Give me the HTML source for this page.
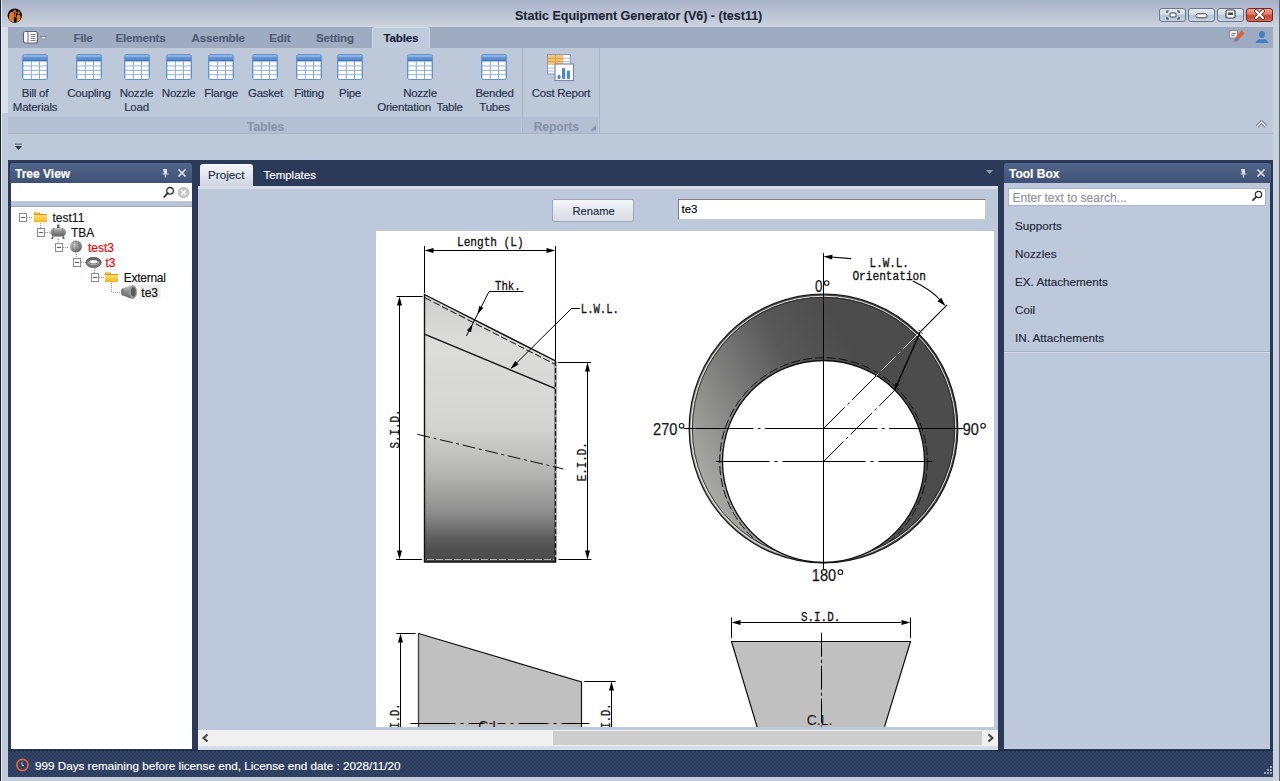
<!DOCTYPE html>
<html><head><meta charset="utf-8">
<style>
*{margin:0;padding:0;box-sizing:border-box}
html,body{width:1280px;height:781px;overflow:hidden}
body{position:relative;background:#c2cbd9;font-family:"Liberation Sans",sans-serif;font-size:12px;color:#1e2b44}
.a{position:absolute}
.t{position:absolute;white-space:nowrap;line-height:1;-webkit-text-stroke:0.15px currentColor}
.rl{font-size:11.5px;letter-spacing:-0.25px;color:#27324a;transform:translateX(-50%)}
.gl{font-size:12px;font-weight:bold;color:#8893a8;transform:translateX(-50%)}
.wb{width:27px;height:14px;border:1px solid #6b778c;border-radius:3px;background:linear-gradient(#e4eaf2,#d3dce8 45%,#b5c3d5 55%,#c9d4e2)}
.tr{font-size:12px;color:#111}
.ti{font-size:11.7px;color:#1e2638}
.tb{font-size:11.6px;font-weight:bold;color:#4f5c76;letter-spacing:-0.2px}
</style></head><body>

<svg width="0" height="0" style="position:absolute">
<defs>
<linearGradient id="gHdr" x1="0" y1="0" x2="0" y2="1"><stop offset="0" stop-color="#7aa5de"/><stop offset="1" stop-color="#4f82c9"/></linearGradient>
<symbol id="tbl" viewBox="0 0 26 26">
<rect x="0.5" y="0.5" width="25" height="25" rx="2" fill="#88acdc" stroke="#6691cf"/>
<rect x="1" y="1" width="24" height="5.8" rx="1" fill="url(#gHdr)"/>
<rect x="1.5" y="1.5" width="23" height="1" fill="#a9c6ec"/>
<rect x="1" y="6.3" width="24" height="0.9" fill="#3c6db5"/>
<g fill="#fdfeff">
<rect x="1.5" y="7.6" width="7.3" height="3.9"/><rect x="9.8" y="7.6" width="7.2" height="3.9"/><rect x="18" y="7.6" width="6.5" height="3.9"/>
<rect x="1.5" y="12.4" width="7.3" height="3.5"/><rect x="9.8" y="12.4" width="7.2" height="3.5"/><rect x="18" y="12.4" width="6.5" height="3.5"/>
<rect x="1.5" y="16.8" width="7.3" height="3.5"/><rect x="9.8" y="16.8" width="7.2" height="3.5"/><rect x="18" y="16.8" width="6.5" height="3.5"/>
<rect x="1.5" y="21.2" width="7.3" height="3.8"/><rect x="9.8" y="21.2" width="7.2" height="3.8"/><rect x="18" y="21.2" width="6.5" height="3.8"/>
</g>
</symbol>
</defs></svg>
<!-- window frame -->
<div class="a" style="left:0;top:0;width:1280px;height:781px;background:linear-gradient(#a7b2c6,#c9d1dd 25px,#d2d9e3 26px,#c0cad9 27px,#c0cad9)"></div>
<div class="a" style="left:0;top:0;width:1px;height:781px;background:#1b2230"></div>
<div class="a" style="left:1px;top:0;width:1px;height:781px;background:#e8edf4"></div>
<div class="a" style="left:2px;top:27px;width:6px;height:86px;background:#d9dfe8"></div>
<div class="a" style="left:1279px;top:0;width:1px;height:781px;background:#5b6578"></div>
<div class="a" style="left:1273px;top:27px;width:6px;height:754px;background:#c9d1dd"></div>

<!-- title bar -->
<div class="t" style="left:515px;top:10px;font-weight:bold;font-size:12.5px;color:#1d2636">Static Equipment Generator (V6) - (test11)</div>

<!-- ribbon tab row -->
<div class="a" style="left:8px;top:27px;width:1265px;height:21px;background:#9eabc1"></div>
<div class="a" style="left:372px;top:27px;width:58px;height:21px;background:#bfcada;border:1px solid #d0d8e3;border-bottom:none;border-radius:3px 3px 0 0"></div>

<!-- ribbon body -->
<div class="a" style="left:8px;top:48px;width:1265px;height:86px;background:#bdc8d8"></div>
<div class="a" style="left:8px;top:117px;width:513px;height:16px;background:#b4c0d1"></div>
<div class="a" style="left:523px;top:117px;width:75px;height:16px;background:#b4c0d1"></div>
<div class="a" style="left:8px;top:133px;width:1265px;height:1px;background:#a9b5c7"></div>


<!-- ribbon icons -->
<svg class="a" style="left:22px;top:54px" width="26" height="26"><use href="#tbl"/></svg>
<svg class="a" style="left:76px;top:54px" width="26" height="26"><use href="#tbl"/></svg>
<svg class="a" style="left:124px;top:54px" width="26" height="26"><use href="#tbl"/></svg>
<svg class="a" style="left:166px;top:54px" width="26" height="26"><use href="#tbl"/></svg>
<svg class="a" style="left:208px;top:54px" width="26" height="26"><use href="#tbl"/></svg>
<svg class="a" style="left:252px;top:54px" width="26" height="26"><use href="#tbl"/></svg>
<svg class="a" style="left:296px;top:54px" width="26" height="26"><use href="#tbl"/></svg>
<svg class="a" style="left:337px;top:54px" width="26" height="26"><use href="#tbl"/></svg>
<svg class="a" style="left:407px;top:54px" width="26" height="26"><use href="#tbl"/></svg>
<svg class="a" style="left:481px;top:54px" width="26" height="26"><use href="#tbl"/></svg>
<!-- cost report icon -->
<svg class="a" style="left:546px;top:53px" width="30" height="30" viewBox="0 0 30 30">
<rect x="1.5" y="1.5" width="23" height="19.5" fill="#f4f7fc" stroke="#8c98bd"/>
<rect x="2" y="2" width="15.5" height="10" fill="#f2c676"/>
<path d="M2 5.5h15.5M2 8.5h15.5M9.5 2v10" stroke="#d9a449" stroke-width="1"/>
<path d="M17.5 5.5h7M17.5 8.5h7M2 15h7M2 18h7" stroke="#b9c4de" stroke-width="1"/>
<rect x="9" y="11" width="18.5" height="16.5" fill="#fff" stroke="#7e88ad" stroke-width="1.2"/>
<rect x="11.5" y="22" width="3" height="4" rx="1" fill="#4f86cc"/>
<rect x="16" y="15" width="3.2" height="11" rx="1" fill="#4f86cc"/>
<rect x="20.8" y="17.5" width="3.2" height="8.5" rx="1" fill="#4f86cc"/>
</svg>
<!-- ribbon labels -->
<div class="t rl" style="left:35px;top:88px">Bill of</div>
<div class="t rl" style="left:35px;top:101.8px">Materials</div>
<div class="t rl" style="left:89px;top:88px">Coupling</div>
<div class="t rl" style="left:136.5px;top:88px">Nozzle</div>
<div class="t rl" style="left:136.5px;top:101.8px">Load</div>
<div class="t rl" style="left:178.7px;top:88px">Nozzle</div>
<div class="t rl" style="left:221px;top:88px">Flange</div>
<div class="t rl" style="left:265.5px;top:88px">Gasket</div>
<div class="t rl" style="left:309px;top:88px">Fitting</div>
<div class="t rl" style="left:350px;top:88px">Pipe</div>
<div class="t rl" style="left:420px;top:88px">Nozzle</div>
<div class="t rl" style="left:420px;top:101.8px">Orientation&nbsp; Table</div>
<div class="t rl" style="left:494.5px;top:88px">Bended</div>
<div class="t rl" style="left:494.5px;top:101.8px">Tubes</div>
<div class="t rl" style="left:561px;top:88px">Cost Report</div>
<div class="t gl" style="left:265.5px;top:120.5px">Tables</div>
<div class="t gl" style="left:556.3px;top:120.5px">Reports</div>
<div class="a" style="left:522px;top:48px;width:1px;height:86px;background:#a9b5c7"></div>
<div class="a" style="left:599px;top:48px;width:1px;height:86px;background:#a9b5c7"></div>
<svg class="a" style="left:590px;top:124px" width="8" height="8"><path d="M6 1v5.5H0.5z" fill="#8995aa"/></svg>
<!-- tab labels -->
<div class="t tb" style="left:73.4px;top:32px">File</div>
<div class="t tb" style="left:115.5px;top:32px">Elements</div>
<div class="t tb" style="left:191.5px;top:32px">Assemble</div>
<div class="t tb" style="left:269.3px;top:32px">Edit</div>
<div class="t tb" style="left:316px;top:32px">Setting</div>
<div class="t tb" style="left:383.6px;top:32px;color:#15203a">Tables</div>
<!-- qat row -->
<div class="a" style="left:8px;top:135px;width:1265px;height:25px;background:#bdc8d8"></div>


<!-- app logo -->
<svg class="a" style="left:7px;top:8px" width="16" height="16" viewBox="0 0 16 16">
<defs><clipPath id="lc"><circle cx="7.8" cy="7.6" r="7"/></clipPath></defs>
<circle cx="7.8" cy="7.6" r="7.2" fill="#0a0806"/>
<g clip-path="url(#lc)" fill="#de7a25">
<path d="M2 16V8.5C2 5.5 3.3 3.8 5 3.8S7.6 5.3 7.6 7.5V16z"/>
<path d="M5.8 3.6C6.5 2.2 8 1.8 9 2.6 9.6 3.1 9.6 4.3 9.3 5.2L8.8 9.8 8 9.8 8.3 5C8.4 4.2 7.8 3.8 7 4.3z"/>
<path d="M9.6 16V9.2C9.6 7.4 10.4 6.4 11.6 6.4S13.6 7.4 13.6 9.2V16z"/>
<circle cx="11.6" cy="4.8" r="1.2"/>
</g>
<path d="M7.6 9v7" stroke="#0a0806" stroke-width="1.4" clip-path="url(#lc)"/>
</svg>
<!-- window buttons -->
<div class="a wb" style="left:1159px;top:8px"></div>
<div class="a wb" style="left:1188px;top:8px"></div>
<div class="a wb" style="left:1217px;top:8px"></div>
<div class="a wb" style="left:1246px;top:8px;border-color:#6a2a30;background:linear-gradient(#f3a28c,#e27a60 45%,#c9462a 55%,#d9674c)"></div>
<svg class="a" style="left:1166px;top:10px" width="14" height="10" viewBox="0 0 14 10"><path d="M1 3V1h2M11 1h2v2M13 7v2h-2M3 9H1V7" stroke="#3a4252" stroke-width="1.2" fill="none"/><rect x="4" y="3" width="6" height="4" rx="1" fill="#fff" stroke="#3a4252"/></svg>
<svg class="a" style="left:1195px;top:13px" width="14" height="6" viewBox="0 0 14 6"><rect x="1" y="0.8" width="11" height="4" rx="1.5" fill="#fff" stroke="#3a4252"/></svg>
<svg class="a" style="left:1224px;top:9px" width="14" height="11" viewBox="0 0 14 11"><rect x="2" y="1" width="9" height="8" rx="1.5" fill="#fff" stroke="#3a4252" stroke-width="1.2"/><rect x="4" y="3.5" width="5" height="2.5" fill="#3a4a66"/></svg>
<svg class="a" style="left:1253px;top:9px" width="14" height="12" viewBox="0 0 14 12"><path d="M3 2l7 7M10 2l-7 7" stroke="#3a2a2a" stroke-width="3.6" stroke-linecap="round"/><path d="M3 2l7 7M10 2l-7 7" stroke="#fff" stroke-width="2.2" stroke-linecap="round"/></svg>
<!-- app menu icon -->
<svg class="a" style="left:22px;top:30px" width="28" height="15" viewBox="0 0 28 15">
<rect x="1.5" y="1.5" width="14" height="11.5" rx="2" fill="#fff" stroke="#5c6478" stroke-width="1.2"/>
<path d="M6 2v10.5" stroke="#5c6478" stroke-width="1"/>
<path d="M8.5 4.5h5M8.5 6.5h5M8.5 8.5h5M8.5 10.5h5" stroke="#6a7286" stroke-width="0.9"/>
<path d="M18.5 6.5h6l-3 3.5z" fill="#fff" stroke="#6a7286" stroke-width="0.8"/>
</svg>
<!-- eraser icon -->
<svg class="a" style="left:1228px;top:29px" width="18" height="14" viewBox="0 0 18 14">
<rect x="1.5" y="1.5" width="8" height="7.5" fill="#f2f2f2" stroke="#8a8a8a"/>
<path d="M3.5 4.5h4M3.5 6.5h3" stroke="#777" stroke-width="1"/>
<path d="M7.5 8.5L13.5 1.5 16.5 4 10.5 11z" fill="#e35f3a"/>
<path d="M7.5 8.5l3 2.5-2 1.8-2.2-1.9z" fill="#4b86d0"/>
<path d="M6.3 10.9l-0.8 2.1 2.2-0.8z" fill="#e35f3a"/>
</svg>
<!-- user icon -->
<svg class="a" style="left:1255px;top:30px" width="14" height="14" viewBox="0 0 14 14">
<ellipse cx="7" cy="4.4" rx="2.9" ry="3.5" fill="#3f80c8"/>
<path d="M0.5 13c0.8-2.6 2.8-3.6 4.2-4 0.8 0.8 3.8 0.8 4.6 0 1.4 0.4 3.4 1.4 4.2 4z" fill="#3f80c8"/>
</svg>
<!-- collapse chevron -->
<svg class="a" style="left:1255px;top:119px" width="13" height="10" viewBox="0 0 13 10"><path d="M2 7.5l4.5-4.5 4.5 4.5" stroke="#6e7688" stroke-width="3.4" fill="none" stroke-linejoin="round"/><path d="M2 7.5l4.5-4.5 4.5 4.5" stroke="#f4f6f9" stroke-width="1.4" fill="none"/></svg>
<!-- qat arrow -->
<svg class="a" style="left:14px;top:143px" width="9" height="8" viewBox="0 0 9 8"><rect x="1" y="0.5" width="7" height="1.3" fill="#6b7486"/><path d="M1 3h7l-3.5 4z" fill="#2c3444"/></svg>
<!-- main navy frame -->
<div class="a" style="left:8px;top:160px;width:1265px;height:617px;background:#2b3a58"></div>

<!-- tree view panel -->
<div class="a" style="left:10px;top:163px;width:182px;height:20px;background:linear-gradient(#52658a,#3f5176);border-radius:3px 3px 0 0"></div>
<div class="t" style="left:15px;top:167.5px;font-weight:bold;font-size:12px;color:#fff">Tree View</div>
<div class="a" style="left:11px;top:183px;width:181px;height:18px;background:#fff"></div>
<div class="a" style="left:11px;top:201px;width:181px;height:6px;background:#b9c5d6;border-bottom:1px solid #9ba7bb"></div>
<div class="a" style="left:11px;top:207px;width:181px;height:542px;background:#fff"></div>


<!-- tree search icons -->
<svg class="a" style="left:163px;top:186px" width="12" height="12" viewBox="0 0 12 12"><circle cx="7" cy="4.8" r="3.3" fill="none" stroke="#2a2f3a" stroke-width="1.3"/><path d="M4.8 7.2L1.2 10.8" stroke="#2a2f3a" stroke-width="1.8" stroke-linecap="round"/></svg>
<svg class="a" style="left:177px;top:186px" width="13" height="13" viewBox="0 0 13 13"><circle cx="6.5" cy="6.5" r="5.8" fill="#c4c4c4"/><path d="M4 4l5 5M9 4l-5 5" stroke="#fff" stroke-width="1.3"/></svg>
<!-- tree rows -->
<svg class="a" style="left:11px;top:207px" width="181" height="100" viewBox="11 207 181 100">
<g stroke="#9a9a9a" stroke-width="1" stroke-dasharray="1 1" fill="none">
<path d="M27 217.5h6M40.5 223v5M45 232.5h5M58.5 239v4M63 247.5h6M76.5 254v4M81 262.5h5M94.5 268v5M99 277.5h6M111.5 283v9M113 292.5h8"/>
</g>
<g fill="#fff" stroke="#8c8c8c" stroke-width="1">
<rect x="19.5" y="213.5" width="7" height="8"/><rect x="37.5" y="228.5" width="7" height="8"/><rect x="55.5" y="243.5" width="7" height="8"/><rect x="73.5" y="258.5" width="7" height="8"/><rect x="91.5" y="273.5" width="7" height="8"/>
</g>
<g stroke="#4060b0" stroke-width="1"><path d="M21 217.5h4M39 232.5h4M57 247.5h4M75 262.5h4M93 277.5h4"/></g>
<!-- folder -->
<defs>
<linearGradient id="gFold" x1="0" y1="0" x2="0" y2="1"><stop offset="0" stop-color="#ffe06a"/><stop offset="1" stop-color="#f2b51c"/></linearGradient>
<radialGradient id="gMet" cx="0.35" cy="0.35" r="0.75"><stop offset="0" stop-color="#d8d8d8"/><stop offset="0.6" stop-color="#8f8f8f"/><stop offset="1" stop-color="#5a5a5a"/></radialGradient>
<linearGradient id="gDrum" x1="0" y1="0" x2="0" y2="1"><stop offset="0" stop-color="#c9c9c9"/><stop offset="0.5" stop-color="#8a8a8a"/><stop offset="1" stop-color="#5f5f5f"/></linearGradient>
</defs>
<g><path d="M34 212.5h5.5l1.2 1.5h6.3v8h-13z" fill="#d9951a"/><path d="M34 215h13v7.2h-13z" fill="url(#gFold)"/><path d="M35 213.5h4" stroke="#f5c35a" stroke-width="1"/></g>
<g><path d="M105 272.5h5.5l1.2 1.5h6.3v8h-13z" fill="#d9951a"/><path d="M105 275h13v7.2h-13z" fill="url(#gFold)"/><path d="M106 273.5h4" stroke="#f5c35a" stroke-width="1"/></g>
<!-- tank -->
<g><rect x="50.5" y="227.5" width="15.5" height="9" rx="4.5" fill="url(#gDrum)"/><path d="M53.5 228v8M62.5 228v8" stroke="#6f6f6f" stroke-width="0.7"/><rect x="57" y="224.5" width="2.5" height="3.5" fill="#666"/><path d="M53 236.5l-1 2.5M63 236.5l1 2.5" stroke="#555" stroke-width="1.6"/></g>
<!-- sphere -->
<circle cx="75.9" cy="246.5" r="6" fill="url(#gMet)"/><path d="M73.5 241.2q-1.5 5.3 0 10.6M76 240.5v12M78.4 241.2q1.5 5.3 0 10.6" stroke="#5e5e5e" stroke-width="0.6" fill="none"/>
<!-- ring -->
<ellipse cx="93.6" cy="262.3" rx="6.6" ry="4" fill="none" stroke="#7a7a7a" stroke-width="2.6"/><ellipse cx="93.6" cy="261.8" rx="4.6" ry="2.2" fill="none" stroke="#3a3a3a" stroke-width="0.9"/><ellipse cx="93.6" cy="262.6" rx="7.6" ry="4.9" fill="none" stroke="#3a3a3a" stroke-width="0.6"/>
<!-- cone -->
<g><path d="M122 288.5l10.5-3.6v14l-10.5-3.6z" fill="url(#gDrum)"/><ellipse cx="133" cy="291.9" rx="4" ry="7" fill="#9a9a9a"/><ellipse cx="133.3" cy="291.9" rx="2.4" ry="4.6" fill="#5a5a5a"/><ellipse cx="122.3" cy="292" rx="1.2" ry="3.6" fill="#777"/></g>
<rect x="139.5" y="284.5" width="21" height="14" fill="#ebebeb"/>
</svg>
<div class="t tr" style="left:52.5px;top:211.7px">test11</div>
<div class="t tr" style="left:71px;top:226.7px">TBA</div>
<div class="t tr" style="left:88px;top:241.7px;color:#f00">test3</div>
<div class="t tr" style="left:105.5px;top:256.7px;color:#f00">t3</div>
<div class="t tr" style="left:123.7px;top:271.7px;letter-spacing:-0.25px">External</div>
<div class="t tr" style="left:141.3px;top:286.7px">te3</div>
<!-- panel header icons -->
<svg class="a" style="left:160px;top:168px" width="10" height="10" viewBox="0 0 10 10"><path d="M3 1h4v4.5h1.5v1h-6v-1H4z" fill="#d8dde8"/><path d="M5.5 6.5v3" stroke="#d8dde8" stroke-width="1.2"/></svg>
<svg class="a" style="left:177px;top:168px" width="10" height="10" viewBox="0 0 10 10"><path d="M1.5 1.5l7 7M8.5 1.5l-7 7" stroke="#e4e8f0" stroke-width="1.6"/></svg>
<!-- document area -->
<div class="a" style="left:198px;top:186px;width:800px;height:564px;background:#bdc9da"></div>
<div class="a" style="left:200px;top:164px;width:53px;height:22px;background:linear-gradient(#f4f6fa,#cfd6e2);border-radius:3px 3px 0 0"></div>
<div class="t" style="left:208px;top:169px;font-size:11.7px;color:#1e2b44">Project</div>
<div class="t" style="left:263.5px;top:169.5px;font-size:11.5px;color:#fff">Templates</div>


<!-- doc tab strip -->
<svg class="a" style="left:985px;top:169px" width="9" height="6" viewBox="0 0 9 6"><path d="M1 1h7l-3.5 4z" fill="#8d9ab2"/></svg>
<div class="a" style="left:198px;top:186px;width:800px;height:3px;background:#d6dde8"></div>
<!-- rename -->
<div class="a" style="left:552px;top:199px;width:82px;height:23px;border:1px solid #9ea7b8;border-radius:2px;background:linear-gradient(#f6f7fa,#e3e7ee 50%,#d7dce6)"></div>
<div class="t" style="left:572.5px;top:205.7px;font-size:11.2px;color:#1e2b44">Rename</div>
<div class="a" style="left:678px;top:199px;width:308px;height:21px;border:1px solid #7d7d7d;border-bottom-color:#c8c8c8;border-right-color:#c8c8c8;background:#fff"></div>
<div class="t" style="left:681.5px;top:204px;font-size:11.5px;color:#000">te3</div>
<!-- drawing -->
<div class="a" style="left:376px;top:231px;width:618px;height:496px;background:#fff"></div>
<!-- DRAW START -->
<svg class="a" style="left:376px;top:231px" width="618" height="496" viewBox="376 231 618 496">
<defs>
<linearGradient id="gEl" gradientUnits="userSpaceOnUse" x1="0" y1="294" x2="0" y2="562">
<stop offset="0" stop-color="#cdcdcd"/><stop offset="0.17" stop-color="#dcdcda"/><stop offset="0.4" stop-color="#d7d7d5"/><stop offset="0.5" stop-color="#d3d3d1"/><stop offset="0.68" stop-color="#b2b2b0"/><stop offset="0.82" stop-color="#8c8c8c"/><stop offset="0.91" stop-color="#5e5e5e"/><stop offset="0.955" stop-color="#4f4f4f"/><stop offset="1" stop-color="#4a4a4a"/>
</linearGradient>
<linearGradient id="gRing" gradientUnits="userSpaceOnUse" x1="695" y1="500" x2="880" y2="400">
<stop offset="0" stop-color="#b2b2b0"/><stop offset="0.35" stop-color="#858584"/><stop offset="0.7" stop-color="#585858"/><stop offset="1" stop-color="#4c4c4c"/>
</linearGradient>
</defs>
<path d="M424.5 294.5L555.5 361V562H424.5z" fill="url(#gEl)" stroke="#111" stroke-width="1.4"/>
<path d="M425.00 297.80L431.23 300.99M433.46 302.13L439.69 305.31M441.92 306.45L448.15 309.64M450.37 310.78L456.60 313.97M458.83 315.11L465.06 318.29M467.29 319.43L473.52 322.62M475.75 323.76L481.98 326.95M484.20 328.08L490.44 331.27M492.66 332.41L498.89 335.60M501.12 336.74L507.35 339.93M509.58 341.06L515.81 344.25M518.03 345.39L524.27 348.58M526.49 349.72L532.72 352.90M534.95 354.04L541.18 357.23M543.41 358.37L549.64 361.56M551.86 362.70L555.00 364.30" stroke="#2a2a2a" stroke-width="1.1" fill="none"/>
<path d="M424.50 334.20L555.50 388.70" stroke="#111" stroke-width="1.4" />
<path d="M555.50 361.00L555.50 562.00" stroke="#111" stroke-width="1.4" />
<path d="M555.50 366.00L555.50 368.00M555.50 373.00L555.50 375.00M555.50 380.00L555.50 382.00M555.50 387.00L555.50 389.00M555.50 394.00L555.50 396.00M555.50 401.00L555.50 403.00M555.50 408.00L555.50 410.00M555.50 415.00L555.50 417.00M555.50 422.00L555.50 424.00M555.50 429.00L555.50 431.00M555.50 436.00L555.50 438.00M555.50 443.00L555.50 445.00M555.50 450.00L555.50 452.00M555.50 457.00L555.50 459.00M555.50 464.00L555.50 466.00M555.50 471.00L555.50 473.00M555.50 478.00L555.50 480.00M555.50 485.00L555.50 487.00M555.50 492.00L555.50 494.00M555.50 499.00L555.50 501.00M555.50 506.00L555.50 508.00M555.50 513.00L555.50 515.00M555.50 520.00L555.50 522.00M555.50 527.00L555.50 529.00M555.50 534.00L555.50 536.00M555.50 541.00L555.50 543.00M555.50 548.00L555.50 550.00M555.50 555.00L555.50 557.00" stroke="#f0f0f0" stroke-width="0.8" fill="none"/>
<path d="M427.00 559.50L434.00 559.50M436.00 559.50L443.00 559.50M445.00 559.50L452.00 559.50M454.00 559.50L461.00 559.50M463.00 559.50L470.00 559.50M472.00 559.50L479.00 559.50M481.00 559.50L488.00 559.50M490.00 559.50L497.00 559.50M499.00 559.50L506.00 559.50M508.00 559.50L515.00 559.50M517.00 559.50L524.00 559.50M526.00 559.50L533.00 559.50M535.00 559.50L542.00 559.50M544.00 559.50L551.00 559.50M553.00 559.50L554.00 559.50" stroke="#e0e0e0" stroke-width="0.7" fill="none"/>
<path d="M424.50 246.00L424.50 293.00" stroke="#000" stroke-width="1" />
<path d="M555.50 246.00L555.50 360.00" stroke="#000" stroke-width="1" />
<path d="M433.00 250.50L547.00 250.50" stroke="#000" stroke-width="1" />
<path d="M424.50 250.50L433.50 248.00L433.50 253.00z" fill="#000"/>
<path d="M555.50 250.50L546.50 253.00L546.50 248.00z" fill="#000"/>
<text x="490.3" y="246" font-family="Liberation Mono" font-size="12.5" text-anchor="middle" fill="#111"  textLength="66.6" lengthAdjust="spacingAndGlyphs" stroke="#111" stroke-width="0.3">Length (L)</text>
<path d="M489.00 291.50L523.50 291.50" stroke="#000" stroke-width="1" />
<path d="M489.00 291.60L466.40 336.00" stroke="#000" stroke-width="1" />
<path d="M477.60 314.20L479.18 306.03L483.28 308.11z" fill="#000"/>
<path d="M472.60 324.20L471.02 332.37L466.92 330.29z" fill="#000"/>
<text x="495" y="289.5" font-family="Liberation Mono" font-size="12.5" text-anchor="start" fill="#111"  textLength="25.7" lengthAdjust="spacingAndGlyphs" stroke="#111" stroke-width="0.3">Thk.</text>
<path d="M572.00 308.50L580.00 308.50" stroke="#000" stroke-width="1" />
<path d="M572.00 308.00L513.00 366.50" stroke="#000" stroke-width="1" />
<path d="M510.50 369.00L515.13 360.89L518.65 364.44z" fill="#000"/>
<text x="580.8" y="312.5" font-family="Liberation Mono" font-size="12.5" text-anchor="start" fill="#111"  textLength="38.1" lengthAdjust="spacingAndGlyphs" stroke="#111" stroke-width="0.3">L.W.L.</text>
<path d="M396.50 296.50L422.70 296.50" stroke="#000" stroke-width="1" />
<path d="M396.00 559.50L422.00 559.50" stroke="#000" stroke-width="1" />
<path d="M399.50 305.00L399.50 551.00" stroke="#000" stroke-width="1" />
<path d="M399.50 296.50L402.00 305.50L397.00 305.50z" fill="#000"/>
<path d="M399.50 559.50L397.00 550.50L402.00 550.50z" fill="#000"/>
<text x="398.5" y="429" font-family="Liberation Mono" font-size="12.5" text-anchor="middle" fill="#111" transform="rotate(-90 398.5 429)"  textLength="38.9" lengthAdjust="spacingAndGlyphs" stroke="#111" stroke-width="0.3">S.I.D.</text>
<path d="M558.00 362.50L591.00 362.50" stroke="#000" stroke-width="1" />
<path d="M558.60 559.50L591.40 559.50" stroke="#000" stroke-width="1" />
<path d="M587.50 370.00L587.50 551.00" stroke="#000" stroke-width="1" />
<path d="M587.50 362.50L590.00 371.50L585.00 371.50z" fill="#000"/>
<path d="M587.50 559.50L585.00 550.50L590.00 550.50z" fill="#000"/>
<text x="586" y="461.8" font-family="Liberation Mono" font-size="12.5" text-anchor="middle" fill="#111" transform="rotate(-90 586 461.8)"  textLength="38.9" lengthAdjust="spacingAndGlyphs" stroke="#111" stroke-width="0.3">E.I.D.</text>
<path d="M417.40 434.30L430.05 437.31M433.55 438.14L436.47 438.83M439.97 439.66L452.62 442.67M456.12 443.50L459.04 444.20M462.54 445.03L475.19 448.04M478.69 448.87L481.61 449.56M485.11 450.39L497.76 453.40M501.26 454.23L504.18 454.93M507.69 455.76L520.33 458.76M523.84 459.60L526.75 460.29M530.26 461.12L542.90 464.13M546.41 464.96L549.33 465.65M552.83 466.49L563.40 469.00" stroke="#111" stroke-width="1" fill="none"/>
<circle cx="823.5" cy="428.5" r="134.3" fill="url(#gRing)" stroke="#1a1a1a" stroke-width="1.3"/>
<circle cx="823.5" cy="428.5" r="132.3" fill="none" stroke="#f0f0f0" stroke-width="0.9"/>
<circle cx="823.5" cy="428.5" r="131.10000000000002" fill="none" stroke="#222" stroke-width="0.8"/>
<clipPath id="cpR"><circle cx="823.5" cy="428.5" r="131.3"/></clipPath>
<circle cx="823.5" cy="461.5" r="103.8" fill="none" stroke="#111" stroke-width="1" stroke-dasharray="9 3" clip-path="url(#cpR)"/>
<circle cx="823.5" cy="461.5" r="101" fill="#fff" stroke="#111" stroke-width="1.3"/>
<path d="M823.50 253.00L823.50 569.00" stroke="#000" stroke-width="1" />
<path d="M823.50 428.50L764.90 428.50M760.40 428.50L757.90 428.50M753.40 428.50L683.70 428.50" stroke="#000" stroke-width="1.1" fill="none"/>
<path d="M823.50 428.50L877.50 428.50M882.00 428.50L884.50 428.50M889.00 428.50L963.80 428.50" stroke="#000" stroke-width="1.1" fill="none"/>
<path d="M823.50 461.50L782.50 461.50M777.50 461.50L774.50 461.50M769.50 461.50L716.30 461.50" stroke="#000" stroke-width="1.1" fill="none"/>
<path d="M823.50 461.50L865.50 461.50M870.50 461.50L873.50 461.50M878.50 461.50L932.00 461.50" stroke="#000" stroke-width="1.1" fill="none"/>
<path d="M823.50 428.50L844.71 407.29M847.54 404.46L849.31 402.69M852.14 399.86L876.43 375.57" stroke="#000" stroke-width="1" fill="none"/>
<path d="M876.43 375.57L878.55 373.45M881.38 370.62L895.52 356.48M898.35 353.65L900.12 351.88M902.94 349.06L918.46 333.54" stroke="#e6e6e6" stroke-width="1" fill="none"/>
<path d="M918.46 333.54L947.10 304.90" stroke="#000" stroke-width="1.1" />
<path d="M918.25 329.51L922.49 333.75" stroke="#000" stroke-width="0.8" />
<path d="M823.50 461.50L843.30 441.70M846.13 438.87L847.90 437.10M850.72 434.28L871.94 413.06M874.77 410.23L876.53 408.47M879.36 405.64L894.56 390.44" stroke="#000" stroke-width="1" fill="none"/>
<path d="M919.80 333.00L894.50 390.20" stroke="#000" stroke-width="1.3" />
<path d="M894.50 390.20L895.50 382.99L899.16 384.61z" fill="#000"/>
<path d="M831.00 257.00L851.20 258.60" stroke="#000" stroke-width="1.1" />
<path d="M823.30 256.60L832.44 254.78L832.13 259.57z" fill="#000"/>
<path d="M912.7 281Q932 290 941 301" stroke="#000" stroke-width="1.1" fill="none"/>
<path d="M945.50 306.00L937.47 301.17L941.28 297.64z" fill="#000"/>
<text x="889.2" y="267" font-family="Liberation Mono" font-size="12.5" text-anchor="middle" fill="#111"  textLength="39.2" lengthAdjust="spacingAndGlyphs" stroke="#111" stroke-width="0.3">L.W.L.</text>
<text x="889.2" y="280" font-family="Liberation Mono" font-size="12.5" text-anchor="middle" fill="#111"  textLength="73.5" lengthAdjust="spacingAndGlyphs" stroke="#111" stroke-width="0.3">Orientation</text>
<text x="815" y="291.7" font-family="Liberation Sans" font-size="16.5" text-anchor="start" fill="#1a1a1a" stroke="#1a1a1a" stroke-width="0.25" textLength="7.5" lengthAdjust="spacingAndGlyphs">0</text>
<circle cx="826.70" cy="283.00" r="2.3" fill="none" stroke="#1a1a1a" stroke-width="1.1"/>
<text x="653" y="434.5" font-family="Liberation Sans" font-size="16.5" text-anchor="start" fill="#1a1a1a" stroke="#1a1a1a" stroke-width="0.25" textLength="24.4" lengthAdjust="spacingAndGlyphs">270</text>
<circle cx="681.60" cy="425.80" r="2.3" fill="none" stroke="#1a1a1a" stroke-width="1.1"/>
<text x="962.8" y="434.5" font-family="Liberation Sans" font-size="16.5" text-anchor="start" fill="#1a1a1a" stroke="#1a1a1a" stroke-width="0.25" textLength="16.1" lengthAdjust="spacingAndGlyphs">90</text>
<circle cx="983.10" cy="425.80" r="2.3" fill="none" stroke="#1a1a1a" stroke-width="1.1"/>
<text x="811.8" y="580.9" font-family="Liberation Sans" font-size="16.5" text-anchor="start" fill="#1a1a1a" stroke="#1a1a1a" stroke-width="0.25" textLength="24.4" lengthAdjust="spacingAndGlyphs">180</text>
<circle cx="840.40" cy="572.20" r="2.3" fill="none" stroke="#1a1a1a" stroke-width="1.1"/>
<path d="M418.5 740V633.5L581.5 681.9V740" fill="#c0c0c0" stroke="#111" stroke-width="1.2"/>
<path d="M418.50 633.50L418.50 740.00" stroke="#444" stroke-width="1.1" />
<path d="M396.30 633.50L415.60 633.50" stroke="#000" stroke-width="1" />
<path d="M400.50 642.00L400.50 740.00" stroke="#000" stroke-width="1" />
<path d="M400.50 633.50L403.00 642.50L398.00 642.50z" fill="#000"/>
<path d="M584.20 681.50L615.70 681.50" stroke="#000" stroke-width="1" />
<path d="M611.50 690.00L611.50 740.00" stroke="#000" stroke-width="1" />
<path d="M611.50 681.50L614.00 690.50L609.00 690.50z" fill="#000"/>
<path d="M410.50 723.50L455.50 723.50M460.50 723.50L463.50 723.50M468.50 723.50L484.50 723.50M489.50 723.50L492.50 723.50M497.50 723.50L505.50 723.50M510.50 723.50L513.50 723.50M518.50 723.50L548.50 723.50M553.50 723.50L556.50 723.50M561.50 723.50L589.30 723.50" stroke="#000" stroke-width="1.1" fill="none"/>
<text x="491" y="731" font-family="Liberation Sans" font-size="14" text-anchor="middle" fill="#111" >C.L.</text>
<text x="398.5" y="716" font-family="Liberation Mono" font-size="12.5" text-anchor="middle" fill="#111" transform="rotate(-90 398.5 716)"  textLength="25" lengthAdjust="spacingAndGlyphs" stroke="#111" stroke-width="0.3">I.D.</text>
<text x="609.5" y="716" font-family="Liberation Mono" font-size="12.5" text-anchor="middle" fill="#111" transform="rotate(-90 609.5 716)"  textLength="25" lengthAdjust="spacingAndGlyphs" stroke="#111" stroke-width="0.3">I.D.</text>
<path d="M731.5 641.5H910.5L880.5 740H761z" fill="#c0c0c0" stroke="#111" stroke-width="1.2"/>
<path d="M731.50 617.50L731.50 638.00" stroke="#000" stroke-width="1" />
<path d="M910.50 617.50L910.50 638.00" stroke="#000" stroke-width="1" />
<path d="M740.00 622.50L901.00 622.50" stroke="#000" stroke-width="1" />
<path d="M731.50 622.50L740.50 620.00L740.50 625.00z" fill="#000"/>
<path d="M910.50 622.50L901.50 625.00L901.50 620.00z" fill="#000"/>
<text x="820.6" y="620.5" font-family="Liberation Mono" font-size="12.5" text-anchor="middle" fill="#111"  textLength="39.2" lengthAdjust="spacingAndGlyphs" stroke="#111" stroke-width="0.3">S.I.D.</text>
<path d="M821.50 632.70L821.50 656.70M821.50 659.70L821.50 662.70M821.50 665.70L821.50 689.70M821.50 692.70L821.50 695.70M821.50 698.70L821.50 722.70M821.50 725.70L821.50 728.70M821.50 731.70L821.50 740.00" stroke="#000" stroke-width="1" fill="none"/>
<text x="819.5" y="725" font-family="Liberation Sans" font-size="14" text-anchor="middle" fill="#111" >C.L.</text>
</svg>
<!-- DRAW END -->
<!-- scrollbar -->
<div class="a" style="left:198px;top:730px;width:800px;height:16px;background:#f0f0f0"></div>
<div class="a" style="left:553px;top:731px;width:429px;height:14px;background:#cdcdcd"></div>
<svg class="a" style="left:201px;top:733px" width="9" height="10" viewBox="0 0 9 10"><path d="M6.5 1.5l-4 3.5 4 3.5" stroke="#404040" stroke-width="2" fill="none"/></svg>
<svg class="a" style="left:986px;top:733px" width="9" height="10" viewBox="0 0 9 10"><path d="M2.5 1.5l4 3.5-4 3.5" stroke="#404040" stroke-width="2" fill="none"/></svg>
<div class="a" style="left:198px;top:746px;width:800px;height:4px;background:#d6dde8"></div>
<!-- toolbox panel -->
<div class="a" style="left:1004px;top:163px;width:267px;height:20px;background:linear-gradient(#52658a,#3f5176);border-radius:3px 3px 0 0"></div>
<div class="t" style="left:1009px;top:167.5px;font-weight:bold;font-size:12px;color:#fff">Tool Box</div>
<div class="a" style="left:1004px;top:183px;width:266px;height:566px;background:#bdc9da"></div>


<!-- toolbox content -->
<svg class="a" style="left:1238px;top:168px" width="10" height="10" viewBox="0 0 10 10"><path d="M3 1h4v4.5h1.5v1h-6v-1H4z" fill="#d8dde8"/><path d="M5.5 6.5v3" stroke="#d8dde8" stroke-width="1.2"/></svg>
<svg class="a" style="left:1256px;top:168px" width="10" height="10" viewBox="0 0 10 10"><path d="M1.5 1.5l7 7M8.5 1.5l-7 7" stroke="#e4e8f0" stroke-width="1.6"/></svg>
<div class="a" style="left:1008px;top:188px;width:258px;height:18px;border:1px solid #a9b3c4;background:#fff"></div>
<div class="t" style="left:1012.5px;top:192px;font-size:12px;color:#8d929b">Enter text to search...</div>
<svg class="a" style="left:1252px;top:190px" width="11" height="12" viewBox="0 0 11 12"><circle cx="6.5" cy="4.5" r="3.2" fill="none" stroke="#2a2f3a" stroke-width="1.2"/><path d="M4.3 6.8L1 10.2" stroke="#2a2f3a" stroke-width="1.7" stroke-linecap="round"/></svg>
<div class="t ti" style="left:1015px;top:219.5px">Supports</div>
<div class="t ti" style="left:1015px;top:247.5px">Nozzles</div>
<div class="t ti" style="left:1015px;top:275.5px">EX. Attachements</div>
<div class="t ti" style="left:1015px;top:303.5px">Coil</div>
<div class="t ti" style="left:1015px;top:331.5px">IN. Attachements</div>
<div class="a" style="left:1004px;top:351px;width:266px;height:1px;background:#a8b4c6"></div>
<div class="a" style="left:1004px;top:352px;width:266px;height:1px;background:#d4dbe6"></div>
<!-- status bar -->
<div class="a" style="left:8px;top:750px;width:1265px;height:27px;border-top:1px solid #1b2946;background:radial-gradient(circle at 1px 1px,#34466a 0.7px,transparent 1.1px) 0 0/4px 4px,radial-gradient(circle at 1px 1px,#34466a 0.7px,transparent 1.1px) 2px 2px/4px 4px,#2a3a59"></div>
<div class="t" style="left:35px;top:760px;font-size:11.7px;color:#fff">999 Days remaining before license end, License end date : 2028/11/20</div>

<svg class="a" style="left:15px;top:757px" width="16" height="16" viewBox="0 0 16 16"><circle cx="7.5" cy="8" r="5.6" fill="none" stroke="#e8673a" stroke-width="1.6"/><path d="M7 5v3.5h2" stroke="#c9cdd6" stroke-width="1" fill="none"/></svg>
<svg class="a" style="left:1261px;top:765px" width="12" height="12" viewBox="0 0 12 12"><g fill="#9aa6bc"><rect x="9" y="1" width="2" height="2"/><rect x="6" y="4" width="2" height="2"/><rect x="9" y="4" width="2" height="2"/><rect x="3" y="7" width="2" height="2"/><rect x="6" y="7" width="2" height="2"/><rect x="9" y="7" width="2" height="2"/></g></svg>
</body></html>
